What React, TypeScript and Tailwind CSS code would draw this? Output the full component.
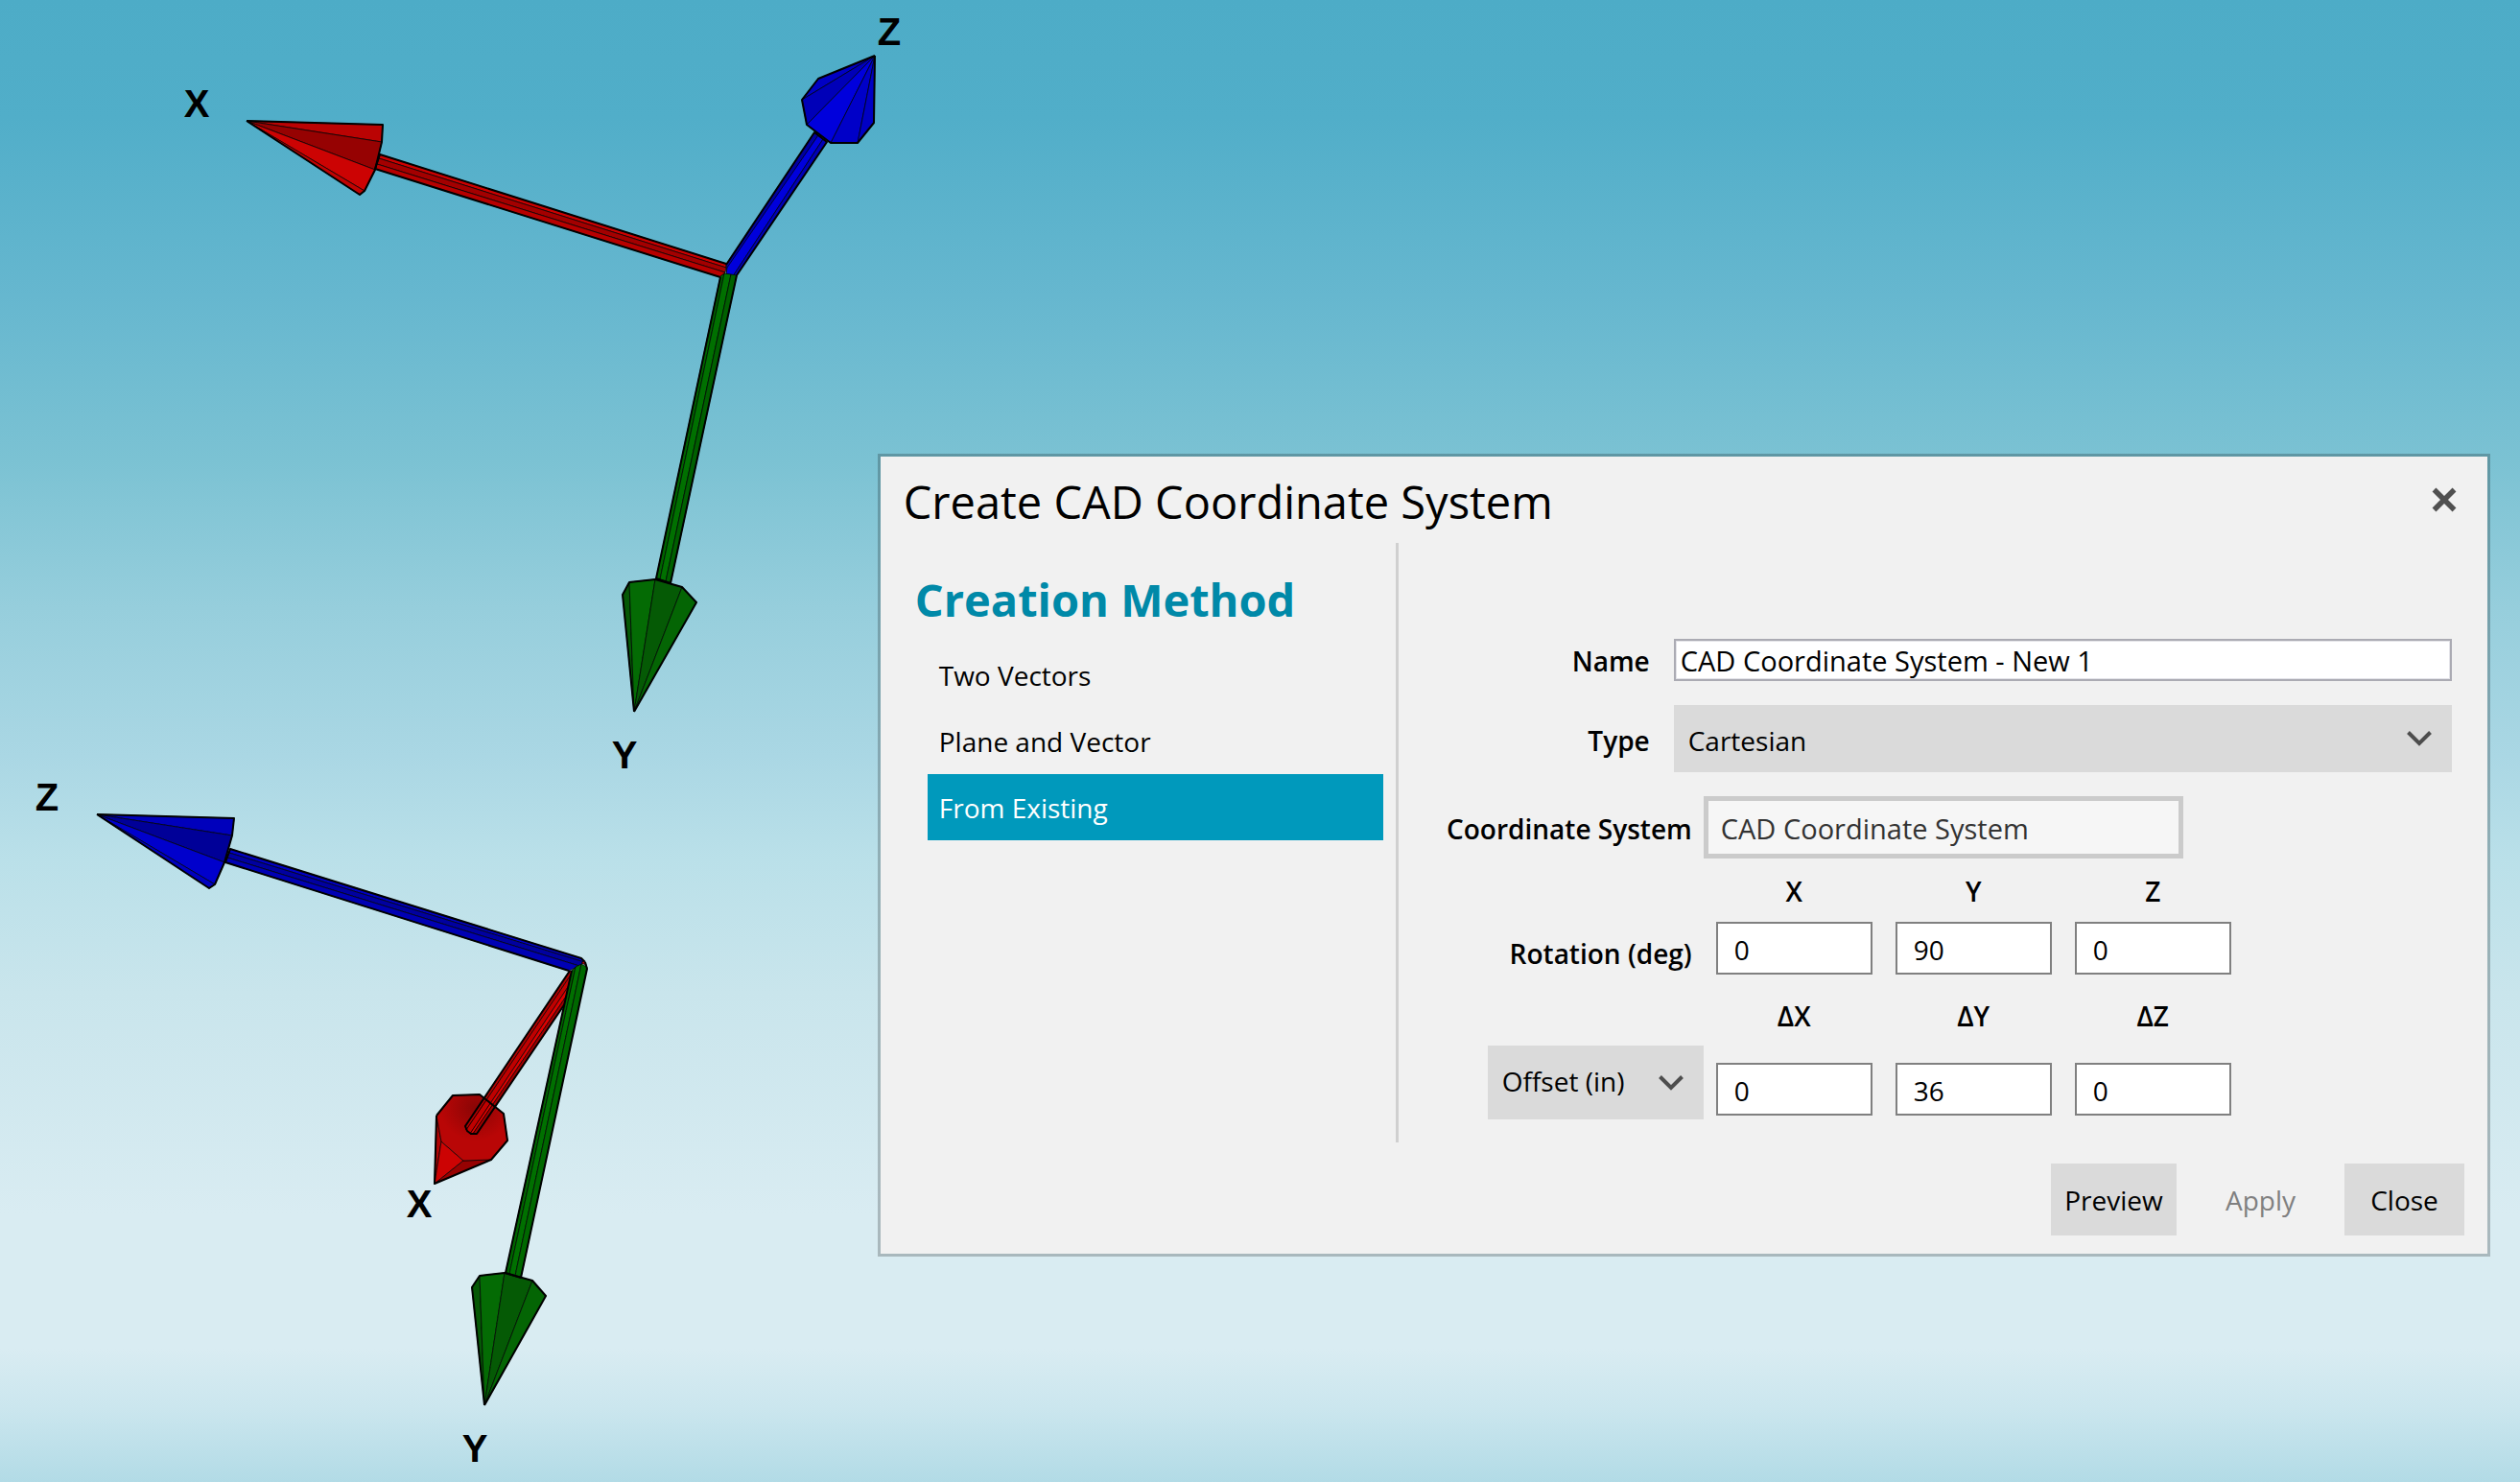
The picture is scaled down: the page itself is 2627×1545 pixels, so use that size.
import React, { useState } from "react";
import clsx from "clsx";

type Shape = { points: string; fill: string };
type Axis = { name: string; shapes: Shape[]; outline: string[] };
type Label = { text: string; x: number; y: number };

// outlines are open polylines so the shafts stay unclosed where they meet
const axes: Axis[] = [
  {
    name: "first-x",
    shapes: [
      { points: "396,161 757,275 757,279 395,165", fill: "#cc0000" },
      { points: "395,165 757,279 756,284 393,171", fill: "#a30000" },
      { points: "393,171 756,284 751,289 391,176", fill: "#b80000" },
      { points: "257,126 399,130 398,148", fill: "#ba0303" },
      { points: "257,126 398,148 391,177", fill: "#960202" },
      { points: "257,126 391,177 380,199", fill: "#cc0303" },
      { points: "257,126 380,199 375,203", fill: "#c00303" },
    ],
    outline: [
      "757,275 396,161 391,176 751,289",
      "257,126 399,130 398,148 391,177 380,199 375,203 257,126",
    ],
  },
  {
    name: "first-z",
    shapes: [
      { points: "849,138 853,141 758,284 757,276", fill: "#0000a0" },
      { points: "853,141 858,145 764,288 757,286 758,279", fill: "#0000dc" },
      { points: "858,145 862,148 768,287 764,288", fill: "#0000b8" },
      { points: "912,58 853,82 836,104", fill: "#0000c4" },
      { points: "912,58 836,104 841,130", fill: "#0000b8" },
      { points: "912,58 841,130 866,149", fill: "#0000dc" },
      { points: "912,58 866,149 894,149", fill: "#0000c8" },
      { points: "912,58 894,149 911,128", fill: "#0000c4" },
    ],
    outline: [
      "757,276 849,138 862,148 768,287",
      "912,58 853,82 836,104 841,130 866,149 894,149 911,128 912,58",
    ],
  },
  {
    name: "first-y",
    shapes: [
      { points: "751,288 755,285 688,604 684,603", fill: "#006400" },
      { points: "755,285 762,286 694,606 688,604", fill: "#007000" },
      { points: "762,286 768,287 699,608 694,606", fill: "#006000" },
      { points: "661,742 649,620 656,607", fill: "#055805" },
      { points: "661,742 656,607 683,604", fill: "#046b04" },
      { points: "661,742 683,604 711,612", fill: "#055a05" },
      { points: "661,742 711,612 726,628", fill: "#046504" },
    ],
    outline: [
      "751,289 684,603 699,608 768,287",
      "661,742 649,620 656,607 683,604 711,612 726,628 661,742",
    ],
  },
  {
    name: "second-x",
    shapes: [
      { points: "455,1163 460,1190 453,1234", fill: "#b00404" },
      { points: "460,1190 483,1210 453,1234", fill: "#cc0303" },
      { points: "483,1210 512,1209 453,1234", fill: "#960202" },
      {
        points: "472,1142 500,1141 525,1161 529,1189 512,1209 483,1210 460,1190 455,1163",
        fill: "url(#base)",
      },
      { points: "485,1174 486,1178 598,1012 594,1012", fill: "#b00000" },
      { points: "486,1178 490,1182 598,1020 598,1012", fill: "#c00000" },
      { points: "490,1182 493,1182 598,1027 598,1020", fill: "#dd0000" },
      { points: "493,1182 497,1182 598,1033 598,1027", fill: "#a00000" },
    ],
    outline: [
      "455,1163 472,1142 500,1141 525,1161 529,1189 512,1209 453,1234 455,1163",
      "594,1012 485,1174 487,1179 491,1182 497,1182 598,1033",
    ],
  },
  {
    name: "second-z",
    shapes: [
      { points: "240,885 606,999 609,1003 239,889", fill: "#0000c4" },
      { points: "239,889 609,1003 604,1007 237,894", fill: "#0000a0" },
      { points: "237,894 604,1007 593,1012 235,899", fill: "#0000b4" },
      { points: "101,849 244,853 242,871", fill: "#0000bc" },
      { points: "101,849 242,871 234,899", fill: "#000098" },
      { points: "101,849 234,899 224,922", fill: "#0000cc" },
      { points: "101,849 224,922 218,926", fill: "#0000c0" },
    ],
    outline: [
      "593,1012 235,899 240,885 606,999 610,1003",
      "101,849 244,853 242,871 234,899 224,922 218,926 101,849",
    ],
  },
  {
    name: "second-y",
    shapes: [
      { points: "606,1004 609,1002 611,1006", fill: "#c00000" },
      { points: "596,1012 600,1008 531,1328 527,1327", fill: "#006400" },
      { points: "600,1008 606,1005 537,1330 531,1328", fill: "#007000" },
      { points: "606,1005 612,1008 543,1332 537,1330", fill: "#006800" },
      { points: "505,1465 492,1342 500,1330", fill: "#055805" },
      { points: "505,1465 500,1330 526,1327", fill: "#046b04" },
      { points: "505,1465 526,1327 555,1335", fill: "#055a05" },
      { points: "505,1465 555,1335 569,1351", fill: "#046504" },
    ],
    outline: [
      "596,1012 527,1327 543,1332 612,1010 610,1003",
      "505,1465 492,1342 500,1330 526,1327 555,1335 569,1351 505,1465",
    ],
  },
];

const labels: Label[] = [
  { text: "X", x: 205, y: 122 },
  { text: "Z", x: 927, y: 47 },
  { text: "Y", x: 651, y: 801 },
  { text: "Z", x: 49, y: 845 },
  { text: "X", x: 437, y: 1269 },
  { text: "Y", x: 495, y: 1524 },
];

function Scene() {
  return (
    <svg
      viewBox="0 0 2627 1545"
      preserveAspectRatio="xMinYMin meet"
      className="absolute inset-0 h-full w-full"
      role="img"
      aria-label="Two coordinate systems"
    >
      <defs>
        <radialGradient id="base" cx="0.55" cy="0.2" r="0.5">
          <stop offset="0" stopColor="#8a0505" />
          <stop offset="1" stopColor="#b90606" />
        </radialGradient>
      </defs>
      {axes.map((axis) => (
        <g key={axis.name} strokeLinejoin="round">
          {axis.shapes.map((s) => (
            <polygon key={s.points} points={s.points} fill={s.fill} stroke="#000" strokeOpacity={0.7} strokeWidth={1} />
          ))}
          {axis.outline.map((points) => (
            <polyline key={points} points={points} fill="none" stroke="#000" strokeWidth={2} />
          ))}
        </g>
      ))}
      <g className="font-['Liberation_Sans',Arial,sans-serif] text-[40px] font-bold" textAnchor="middle">
        {labels.map((l) => (
          <text key={`${l.x}-${l.y}`} x={l.x} y={l.y}>
            {l.text}
          </text>
        ))}
      </g>
    </svg>
  );
}

function Chevron({ className }: { className?: string }) {
  return (
    <svg
      viewBox="0 0 26 16"
      className={clsx("pointer-events-none absolute top-1/2 h-4 w-[26px] -translate-y-1/2", className)}
      fill="none"
      stroke="#4d4d4d"
      strokeWidth="4"
      aria-hidden="true"
    >
      <path d="M1.5 1.5 13 13 24.5 1.5" />
    </svg>
  );
}

const methods = ["Two Vectors", "Plane and Vector", "From Existing"];

function AxisFields({ id, values, className }: { id: string; values: string[]; className?: string }) {
  return (
    <div className={clsx("ml-[13px] flex gap-6", className)}>
      {values.map((value, i) => (
        <input
          key={i}
          defaultValue={value}
          aria-labelledby={`${id}-${i}`}
          className="h-[55px] w-[163px] border-2 border-[#808080] bg-white pt-0.5 pl-[17px]"
        />
      ))}
    </div>
  );
}

function AxisHeaders({ id, names, className }: { id: string; names: string[]; className?: string }) {
  return (
    <div className={clsx("ml-[331px] flex gap-6 text-center leading-8 font-semibold", className)}>
      {names.map((name, i) => (
        <span key={name} id={`${id}-${i}`} className="w-[163px]">
          {name}
        </span>
      ))}
    </div>
  );
}

export default function App() {
  const [method, setMethod] = useState("From Existing");

  return (
    <main className="relative min-h-screen overflow-hidden bg-[linear-gradient(to_bottom,#4dacc7_0%,#51aec9_8%,#66b7cf_20%,#7bc2d3_31%,#96cedc_41%,#aad7e4_51%,#bae0e9_58%,#c9e5ec_67%,#d9ecf2_82%,#d9ecf2_91%,#cbe6ee_95%,#b2dbe6_100%)] font-['Open_Sans','Noto_Sans',sans-serif] text-[28px] text-black">
      <Scene />

      <section
        role="dialog"
        aria-labelledby="dialog-title"
        className="absolute top-[473px] right-[31px] w-[64%] border-[3px] border-black/22 bg-[#f1f1f1] bg-clip-padding"
      >
        <header className="flex h-[90px] items-center justify-between pr-8 pl-6">
          <h1 id="dialog-title" className="pt-1 text-[47px] leading-[60px]">
            Create CAD Coordinate System
          </h1>
          <button type="button" aria-label="Close dialog">
            <svg viewBox="0 0 26 26" className="size-[26px]" stroke="#505050" strokeWidth="5.5" aria-hidden="true">
              <path d="M2.5 2.5 23.5 23.5M23.5 2.5 2.5 23.5" />
            </svg>
          </button>
        </header>

        <div className="flex">
          <nav className="w-[540px] shrink-0 border-r-[3px] border-[#d0d0d0] pt-[29px] pr-[13px] pb-[315px]">
            <h2 className="pl-9 text-[47px] leading-[60px] font-bold text-[#0089a8]">Creation Method</h2>
            <ul className="mt-3.5 ml-[49px]">
              {methods.map((m) => (
                <li key={m}>
                  <button
                    type="button"
                    onClick={() => setMethod(m)}
                    className={clsx("h-[69px] w-full pl-3 text-left", m === method && "bg-[#0099bc] text-white")}
                  >
                    {m}
                  </button>
                </li>
              ))}
            </ul>
          </nav>

          <form className="min-w-0 flex-1 pt-[100px] pr-[37px]">
            <div className="flex items-center gap-[25px]">
              <label htmlFor="name" className="w-[262px] pt-0.5 text-right font-semibold">
                Name
              </label>
              <input
                id="name"
                defaultValue="CAD Coordinate System - New 1"
                className="h-11 min-w-0 flex-1 border-2 border-[#ababb3] bg-white pl-[5px] text-[29px] shadow-[inset_0_0_0_1px_#e3e3e8]"
              />
            </div>

            <div className="mt-[25px] flex items-center gap-[25px]">
              <label htmlFor="type" className="w-[262px] pt-1 text-right font-semibold">
                Type
              </label>
              <div className="relative min-w-0 flex-1">
                <select id="type" className="block h-[70px] w-full appearance-none bg-[#dadada] pt-1 pl-[15px]">
                  <option>Cartesian</option>
                </select>
                <Chevron className="right-[21px]" />
              </div>
            </div>

            <div className="mt-[25px] flex items-center">
              <label htmlFor="system" className="w-[318px] pt-0.5 pr-3 text-right font-semibold">
                Coordinate System
              </label>
              <input
                id="system"
                readOnly
                defaultValue="CAD Coordinate System"
                className="h-[65px] w-[500px] border-[5px] border-[#cbcbcb] bg-[#f6f6f6] pt-0.5 pl-[13px] text-[29px] text-[#333]"
              />
            </div>

            <AxisHeaders id="rotation" names={["X", "Y", "Z"]} className="mt-[18px]" />
            <div className="mt-4 flex">
              <span className="w-[318px] pt-[17px] pr-3 text-right leading-8 font-semibold">Rotation (deg)</span>
              <AxisFields id="rotation" values={["0", "90", "0"]} />
            </div>

            <AxisHeaders id="offset" names={["ΔX", "ΔY", "ΔZ"]} className="mt-[27px]" />
            <div className="mt-[15px] flex">
              <div className="relative ml-[93px] w-[225px]">
                <select aria-label="Offset mode" className="block h-[77px] w-full appearance-none bg-[#dadada] pb-1 pl-[15px]">
                  <option>Offset (in)</option>
                </select>
                <Chevron className="right-[21px]" />
              </div>
              <AxisFields id="offset" values={["0", "36", "0"]} className="pt-[18px]" />
            </div>
          </form>
        </div>

        <footer className="flex justify-end pt-[22px] pr-6 pb-[19px]">
          <button type="button" className="h-[75px] w-[131px] bg-[#dadada]">
            Preview
          </button>
          <button type="button" disabled className="h-[75px] w-[175px] text-[#808080]">
            Apply
          </button>
          <button type="button" className="h-[75px] w-[125px] bg-[#dadada]">
            Close
          </button>
        </footer>
      </section>
    </main>
  );
}
